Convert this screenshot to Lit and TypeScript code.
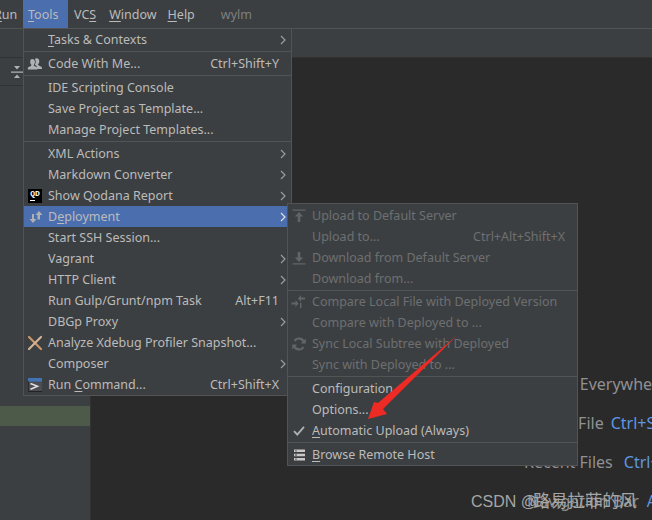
import { LitElement, html, css, svg } from "lit";
import { customElement } from "lit/decorators.js";

type Item = { label?: unknown; key?: string; arrow?: boolean; icon?: unknown; sel?: boolean; dis?: boolean; sep?: string };

const gray = "#afb1b3";
const dim = "#626466";

const icons = {
  people: svg`<svg width="16" height="16" viewBox="0 0 16 16"><path fill="${gray}" d="M9.5 2.2c1.8 0 2.8 1.3 2.8 3 0 1.3-.5 2.4-1.3 3 0 .9.5 1.2 1.8 1.7 1.4.5 2.2 1 2.2 2.1v1H9.8V11c0-1-.9-1.700-2-2.200.6-.8.9-1.800.9-3 0-1.100-.3-2-.8-2.700.4-.5 1-.9 1.600-.9z"/><path fill="${gray}" d="M5.200 3c1.700 0 2.700 1.200 2.700 2.900 0 1.300-.5 2.300-1.200 2.900 0 .9.600 1.300 1.800 1.800 1.200.5 1.800 1 1.800 2v1H.8v-1c0-1 .7-1.500 1.900-2 1.200-.5 1.800-.9 1.800-1.800-.8-.6-1.300-1.600-1.300-2.900C3.200 4.200 3.700 3 5.200 3z"/></svg>`,
  deploy: svg`<svg width="16" height="16" viewBox="0 0 16 16"><path fill="${gray}" d="M5 5h2v5h2.500L6 14 2.500 10H5zM10.500 6H8.500L12 2l3.500 4h-2.500v4.500h-2.500z"/></svg>`,
  x: svg`<svg width="16" height="16" viewBox="0 0 16 16"><path stroke="#c9976a" stroke-width="2.200" stroke-linecap="round" d="M2 2l12 12"/><path stroke="#d0b59a" stroke-width="2.200" stroke-linecap="round" d="M14 2L2 14"/></svg>`,
  run: svg`<svg width="16" height="16" viewBox="0 0 16 16"><rect x="1" y="1" width="14" height="14" fill="#4a4d52"/><rect x="1" y="1" width="14" height="3.500" fill="#3f74b5"/><rect x="1" y="14" width="14" height="1" fill="#222"/><rect x="1" y="4.500" width="1" height="10" fill="#2b2b2b"/><path fill="none" stroke="#e0e0e0" stroke-width="1.500" d="M3.500 6.500L10.500 9.300 3.500 12.200"/></svg>`,
  upload: svg`<svg width="16" height="16" viewBox="0 0 16 16"><path fill="${dim}" d="M1.500 1.500h13v1.300h-13zM8 4l4.200 4.500H9.300V14H6.700V8.500H3.800z"/></svg>`,
  download: svg`<svg width="16" height="16" viewBox="0 0 16 16"><path fill="${dim}" d="M1.500 13.200h13v1.300h-13zM8 12L3.800 7.500h2.900V2h2.600v5.500h2.900z"/></svg>`,
  compare: svg`<svg width="16" height="16" viewBox="0 0 16 16"><path fill="${dim}" d="M10 1v2.500h4v2h-4V8L7 4.500zM.5 8.500h4V6l3 3.500-3 3.500v-2.500h-4zM9 9h1.500v5H9z"/></svg>`,
  sync: svg`<svg width="16" height="16" viewBox="0 0 16 16"><path fill="none" stroke="${dim}" stroke-width="2.200" d="M13 6.500A5.200 5.200 0 0 0 3.500 5M3 9.500A5.200 5.200 0 0 0 12.500 11"/><path fill="${dim}" d="M14.800 2.500v5h-5zM1.200 13.500v-5h5z"/></svg>`,
  check: svg`<svg width="16" height="16" viewBox="0 0 16 16"><path fill="none" stroke="${gray}" stroke-width="1.800" d="M3 8.200l3.300 3.500L13 3.800"/></svg>`,
  browse: svg`<svg width="16" height="16" viewBox="0 0 16 16"><path fill="#c8c8c8" d="M3 2.500h11v2.600H3zM3 6.700h11v2.600H3zM3 10.900h11v2.600H3z"/><path fill="#3c3f41" d="M4 3.400h2v.8H4zM4 7.600h2v.8H4zM4 11.800h2v.8H4z"/></svg>`,
};

const qd = html`<span class="qd"><b>QD</b><i></i></span>`;

const tools: Item[] = [
  { label: html`<u>T</u>asks &amp; Contexts`, arrow: true },
  { sep: "s3" },
  { label: "Code With Me...", key: "Ctrl+Shift+Y", icon: icons.people },
  { sep: "s3" },
  { label: "IDE Scripting Console" },
  { label: "Save Project as Template..." },
  { label: "Manage Project Templates..." },
  { sep: "s3" },
  { label: "XML Actions", arrow: true },
  { label: "Markdown Converter", arrow: true },
  { label: "Show Qodana Report", arrow: true, icon: qd },
  { label: html`D<u>e</u>ployment`, arrow: true, icon: icons.deploy, sel: true },
  { label: "Start SSH Session..." },
  { label: "Vagrant", arrow: true },
  { label: "HTTP Client", arrow: true },
  { label: "Run Gulp/Grunt/npm Task", key: "Alt+F11" },
  { label: "DBGp Proxy", arrow: true },
  { label: "Analyze Xdebug Profiler Snapshot...", icon: icons.x },
  { label: "Composer", arrow: true },
  { label: html`Run <u>C</u>ommand...`, key: "Ctrl+Shift+X", icon: icons.run },
];

const deploy: Item[] = [
  { label: "Upload to Default Server", icon: icons.upload, dis: true },
  { label: "Upload to...", key: "Ctrl+Alt+Shift+X", dis: true },
  { label: "Download from Default Server", icon: icons.download, dis: true },
  { label: "Download from...", dis: true },
  { sep: "s2" },
  { label: "Compare Local File with Deployed Version", icon: icons.compare, dis: true },
  { label: "Compare with Deployed to ...", dis: true },
  { label: "Sync Local Subtree with Deployed", icon: icons.sync, dis: true },
  { label: "Sync with Deployed to ...", dis: true },
  { sep: "s3" },
  { label: "Configuration" },
  { label: "Options..." },
  { label: html`<u>A</u>utomatic Upload (Always)`, icon: icons.check },
  { sep: "s3" },
  { label: html`<u>B</u>rowse Remote Host`, icon: icons.browse },
];

@customElement("app-root")
export class AppRoot extends LitElement {
  static styles = css`
    :host {
      display: block;
      position: relative;
      width: 652px;
      height: 520px;
      overflow: hidden;
      background: #3c3f41;
      font-family: "Noto Sans", "Open Sans", sans-serif;
      font-size: 12.5px;
      color: #bbbbbb;
    }
    u { text-underline-offset: 2px; text-decoration-thickness: 1px; }
    .menubar {
      height: 28px;
      display: flex;
      align-items: center;
      border-bottom: 1px solid #515355;
      margin-left: -6px;
    }
    .mi { padding: 0 5.5px; height: 28px; line-height: 29px; }
    .mi.run { box-sizing: border-box; width: 29px; padding: 0 7px 0 0; text-align: right; }
    .mi.tools { box-sizing: border-box; background: #4b6eaf; padding: 0 0 0 5px; width: 45px; }
    .mi.vcs { padding: 0 7.5px 0 6px; }
    .mi.wylm { margin-left: 15px; color: #7c7e80; }
    .toolbar2 { height: 28px; border-bottom: 1px solid #323232; }
    .main { display: flex; height: 463px; }
    .side { width: 90px; border-right: 1px solid #323232; display: flex; flex-direction: column; }
    .sidebar-top { height: 27px; border-bottom: 1px solid #323232; display: flex; justify-content: flex-end; padding-right: 67px; align-items: center; }
    .green { margin-top: 320px; height: 20px; background: #4d5a4a; }
    .editor {
      flex: 1;
      background: #2a2a2a;
      padding-top: 316px;
      display: flex;
      flex-direction: column;
      gap: 19px;
      font-size: 16px;
      line-height: 20px;
      color: #8f9193;
      white-space: nowrap;
      overflow: hidden;
    }
    .hint b { font-weight: 400; color: #5f96e0; margin-left: 8px; }
    .h1 { margin-left: 434px; }
    .h2 { margin-left: 442px; }
    .h2 b { margin-left: 7px; }
    .h3 { margin-left: 433px; }
    .h3 b { margin-left: 11px; }
    .h4 { margin-left: 436px; }
    .menu {
      position: absolute;
      box-sizing: border-box;
      background: #3c3f41;
      border: 1px solid #515355;
      display: flex;
      flex-direction: column;
      white-space: nowrap;
    }
    .m1 { left: 23px; top: 28px; width: 269px; height: 368px; }
    .m2 { left: 287px; top: 203px; width: 291px; height: 263px; padding-top: 1px; }
    .row {
      height: 21px;
      line-height: 21px;
      display: grid;
      grid-template-columns: 24px 1fr auto 12px;
      flex: none;
    }
    .row.sel { background: #4b6eaf; }
    .row.dis { color: #6d6f71; }
    .ic { display: flex; align-items: center; padding-left: 3px; }
    .ic svg { display: block; }
    .key { text-align: right; }
    .chev { display: flex; align-items: center; padding-left: 1px; }
    .sep { flex: none; box-sizing: border-box; padding-top: 1px; }
    .sep i { display: block; height: 1px; background: #515355; }
    .s2 { height: 2px; }
    .s3 { height: 3px; }
    .qd {
      width: 14px;
      height: 14px;
      background: #000;
      color: #fff;
      display: block;
      font: 700 8px/8px "Liberation Mono", monospace;
      text-align: center;
      margin-left: 1px;
    }
    .qd b { display: block; padding-top: 1px; }
    .qd i { display: block; width: 5px; height: 1px; background: #fff; margin: 2px 0 0 2px; }
    .watermark {
      position: absolute;
      left: 471px;
      top: 491px;
      font: 16px/20px "Liberation Sans", "Noto Sans CJK SC", sans-serif;
      color: #a6a6a6;
      white-space: nowrap;
    }
    .watermark span { font-size: 17.3px; margin-left: -4px; }
    .arrow { position: absolute; left: 0; top: 0; pointer-events: none; }
  `;

  private row(it: Item) {
    if (it.sep) return html`<div class="sep ${it.sep}"><i></i></div>`;
    const chev = svg`<svg width="6" height="10" viewBox="0 0 6 10"><path fill="none" stroke="${it.sel ? "#e0e0e0" : "#9a9c9e"}" stroke-width="1.200" d="M1 1l4 4-4 4"/></svg>`;
    return html`<div class="row ${it.sel ? "sel" : ""} ${it.dis ? "dis" : ""}">
      <span class="ic">${it.icon ?? ""}</span>
      <span>${it.label}</span>
      <span class="key">${it.key ?? ""}</span>
      <span class="chev">${it.arrow ? chev : ""}</span>
    </div>`;
  }

  render() {
    return html`
      <div class="menubar">
        <span class="mi run"><u>R</u>un</span>
        <span class="mi tools"><u>T</u>ools</span>
        <span class="mi vcs">VC<u>S</u></span>
        <span class="mi"><u>W</u>indow</span>
        <span class="mi"><u>H</u>elp</span>
        <span class="mi wylm">wylm</span>
      </div>
      <div class="toolbar2"></div>
      <div class="main">
        <div class="side">
          <div class="sidebar-top">
            <svg width="12" height="14" viewBox="0 0 12 14"><path fill="${gray}" d="M3 1h6L6 4.500zM0 6.500h12v1.200H0zM6 9.500L9 13H3z"/></svg>
          </div>
          <div class="green"></div>
        </div>
        <div class="editor">
          <div class="hint h1">Search Everywhere<b>Double Shift</b></div>
          <div class="hint h2">Go to File<b>Ctrl+Shift+N</b></div>
          <div class="hint h3">Recent Files<b>Ctrl+E</b></div>
          <div class="hint h4">Navigation Bar<b>Alt+Home</b></div>
        </div>
      </div>
      <div class="menu m1">${tools.map((i) => this.row(i))}</div>
      <div class="menu m2">${deploy.map((i) => this.row(i))}</div>
      <svg class="arrow" width="652" height="520" viewBox="0 0 652 520">
        <path fill="#ee2a24" d="M457.500 335L383 409l4 5-19 5 6-17 4 1z"/>
      </svg>
      <div class="watermark">CSDN @<span>路易拉菲的风</span></div>
    `;
  }
}
